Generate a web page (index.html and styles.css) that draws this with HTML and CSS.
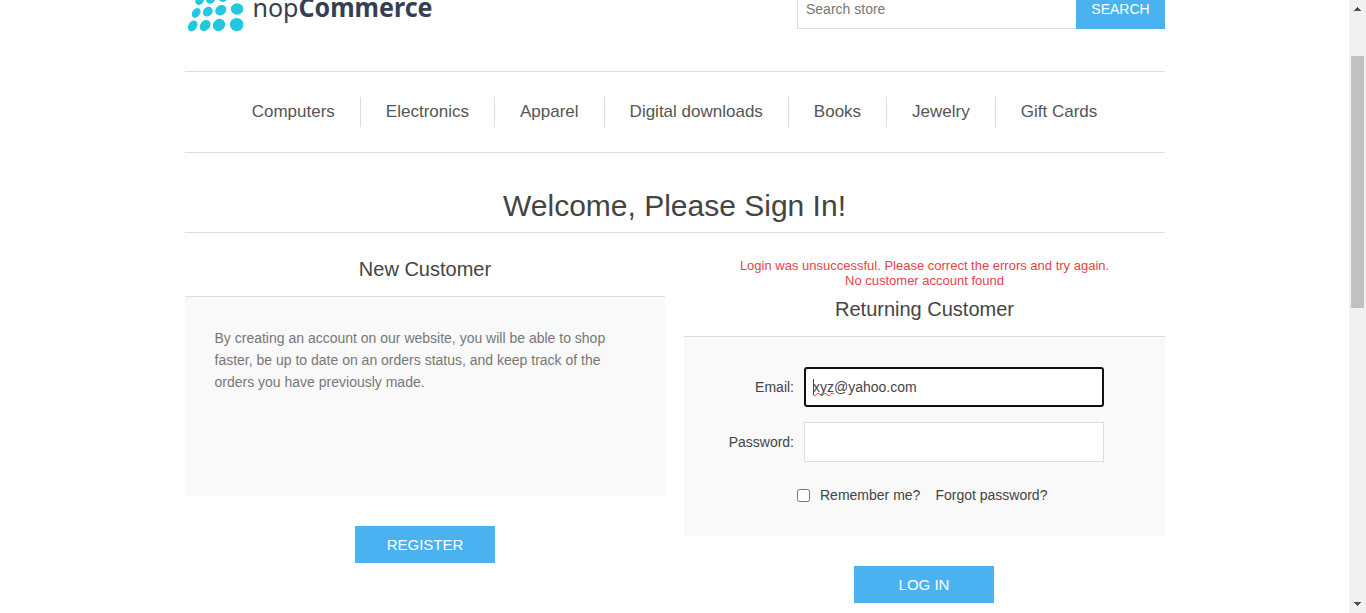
FILE: index.html
```html
<!DOCTYPE html>
<html lang="en">
<head>
<meta charset="utf-8">
<title>nopCommerce - Login</title>
<link rel="stylesheet" href="styles.css">
</head>
<body>
<div class="viewport">
  <div class="page">
    <header class="header">
      <svg class="logo" width="260" height="36" viewBox="0 0 260 36" role="img" aria-label="nopCommerce">
        <g class="logo-dots">
          <ellipse cx="14.7" cy=".2" rx="4" ry="5" transform="rotate(35 14.7 .2)"/>
          <ellipse cx="25.6" cy="-1" rx="4.4" ry="5" transform="rotate(45 25.6 -1)"/>
          <ellipse cx="37.8" cy="-2.8" rx="4.8" ry="4.7"/>
          <ellipse cx="52.3" cy="-4.8" rx="5.8" ry="5"/>
          <ellipse cx="11.2" cy="12.8" rx="3.9" ry="5.3" transform="rotate(35 11.2 12.8)"/>
          <ellipse cx="22.8" cy="11.7" rx="4.4" ry="5.3" transform="rotate(45 22.8 11.7)"/>
          <ellipse cx="35.8" cy="10.2" rx="4.9" ry="5.9" transform="rotate(55 35.8 10.2)"/>
          <ellipse cx="52.1" cy="9" rx="6.3" ry="5.7"/>
          <ellipse cx="7.7" cy="25.9" rx="4.3" ry="5.8" transform="rotate(35 7.7 25.9)"/>
          <ellipse cx="20.1" cy="25.5" rx="4.8" ry="6.1" transform="rotate(40 20.1 25.5)"/>
          <ellipse cx="34" cy="25" rx="5.8" ry="6.5" transform="rotate(45 34 25)"/>
          <ellipse cx="51.7" cy="24.5" rx="6.8" ry="6.6"/>
        </g>
        <text class="logo-text" x="67.5" y="17.3" textLength="46" lengthAdjust="spacingAndGlyphs">nop</text>
        <text class="logo-text logo-bold" x="113.5" y="17.3" textLength="134" lengthAdjust="spacingAndGlyphs">Commerce</text>
      </svg>
      <form class="search">
        <input class="search-input" type="text" placeholder="Search store">
        <button class="btn search-btn" type="button">SEARCH</button>
      </form>
    </header>
    <nav class="menu">
      <a class="menu-item">Computers</a>
      <a class="menu-item">Electronics</a>
      <a class="menu-item">Apparel</a>
      <a class="menu-item">Digital downloads</a>
      <a class="menu-item">Books</a>
      <a class="menu-item">Jewelry</a>
      <a class="menu-item">Gift Cards</a>
    </nav>
    <h1 class="title">Welcome, Please Sign In!</h1>
    <main class="columns">
      <section class="column">
        <h2 class="subtitle">New Customer</h2>
        <div class="panel intro">By creating an account on our website, you will be able to shop faster, be up to date on an orders status, and keep track of the orders you have previously made.</div>
        <button class="btn action" type="button">REGISTER</button>
      </section>
      <section class="column">
        <div class="error">Login was unsuccessful. Please correct the errors and try again.<br>No customer account found</div>
        <h2 class="subtitle">Returning Customer</h2>
        <div class="panel form">
          <div class="row">
            <span class="label">Email:</span>
            <div class="field field-focused"><span class="caret"></span><span class="misspelt">xyz</span>@yahoo.com</div>
          </div>
          <div class="row">
            <label class="label" for="password">Password:</label>
            <input class="field" id="password" type="password">
          </div>
          <div class="options">
            <input class="check" id="remember" type="checkbox">
            <label class="remember" for="remember">Remember me?</label>
            <a>Forgot password?</a>
          </div>
        </div>
        <button class="btn action login" type="button">LOG IN</button>
      </section>
    </main>
  </div>
  <div class="scrollbar">
    <svg width="7" height="4" viewBox="0 0 7 4" shape-rendering="crispEdges"><path d="M3 0h1v1h1v1h1v1h1v1H0V3h1V2h1V1h1z"/></svg>
    <div class="track"><div class="thumb"></div></div>
    <svg width="7" height="4" viewBox="0 0 7 4" shape-rendering="crispEdges"><path d="M0 0h7v1H6v1H5v1H4v1H3V3H2V2H1V1H0z"/></svg>
  </div>
</div>
</body>
</html>
```
FILE: styles.css
```css
* { box-sizing: border-box; margin: 0; padding: 0; }
body {
  background: #fff;
  color: #444;
  font: 14px "Liberation Sans", Arial, sans-serif;
  overflow: hidden;
}
.viewport { display: flex; height: 613px; overflow: hidden; }
.page { width: 980px; margin: 0 184px 0 185px; flex: none; }

.header { display: flex; justify-content: space-between; align-items: flex-start; height: 71px; }
.logo { display: block; overflow: visible; }
.logo-dots { fill: #21c8df; }
.logo-text { font: 26px "Noto Sans", "Open Sans", sans-serif; fill: #353f52; }
.logo-bold { font-weight: 700; }
.search { display: flex; margin-top: -9px; }
.search-input {
  width: 279px; height: 38px;
  border: 1px solid #ddd; border-right: 0;
  padding: 0 8px 2px;
  font: inherit; color: #777;
}
.search-input::placeholder { color: #777; }
.btn {
  display: block; border: 0; background: #4ab2f1; color: #fff;
  font: 15px "Liberation Sans", Arial, sans-serif; text-align: center;
}
.search-btn { width: 89px; height: 38px; padding-bottom: 2px; font-size: 14px; }

.menu {
  display: flex; justify-content: center; align-items: center;
  height: 82px; padding-right: 1px;
  border: solid #ddd; border-width: 1px 0;
}
.menu-item {
  padding: 0 25px; line-height: 30px;
  font-size: 17px; color: #555;
}
.menu-item + .menu-item { border-left: 1px solid #ddd; }

.title {
  height: 80px; padding: 35px 1px 0 0;
  border-bottom: 1px solid #ddd;
  font-size: 30px; font-weight: 400; line-height: 36px; text-align: center;
}
.columns { display: flex; justify-content: space-between; padding-top: 25px; }
.column { width: 480px; }
.column + .column { width: 481px; }
.error { height: 40px; color: #e4434b; font-size: 13px; line-height: 15px; text-align: center; }
.subtitle { height: 38px; font-size: 20px; font-weight: 400; line-height: 22px; text-align: center; }
.panel { height: 200px; border-top: 1px solid #ddd; background: #f9f9f9; }
.intro { padding: 30px 30px 0 29.5px; color: #777; line-height: 22px; }
.form { padding: 30px 61px 0 0; }
.row { display: flex; justify-content: flex-end; align-items: center; margin-bottom: 15px; }
.label { margin-right: 10px; }
.field {
  position: relative;
  width: 300px; height: 40px; padding: 0 8px;
  border: 1px solid #ddd; background: #fff;
  font: inherit; line-height: 38px;
}
.field-focused { border: 2px solid #101010; border-radius: 3px; padding: 0 7px; line-height: 36px; }
.caret { position: absolute; left: 7px; top: 10px; width: 1px; height: 16px; background: #444; }
.misspelt {
  text-decoration: underline wavy #e33; text-decoration-thickness: 1px;
  text-decoration-skip-ink: none; text-underline-offset: 0;
}
.options { display: flex; align-items: center; padding: 10px 0 0 113px; }
.check { width: 13px; height: 13px; margin-right: 10px; }
.remember { margin-right: 15px; }
.action { width: 140px; height: 37px; margin: 30px auto 0; }
.login { margin-left: 170px; }

.scrollbar {
  display: flex; flex-direction: column; align-items: center;
  width: 17px; padding: 7px 0 7px; background: #f1f1f1; fill: #505050;
}
.track { flex: 1; width: 13px; padding-top: 45px; }
.thumb { height: 252px; background: #c1c1c1; }
```
